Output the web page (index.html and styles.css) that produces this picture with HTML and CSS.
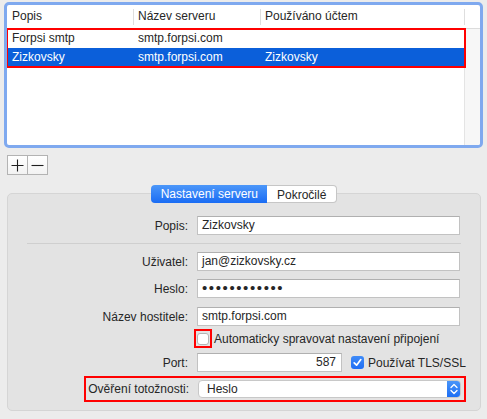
FILE: index.html
```html
<!DOCTYPE html>
<html>
<head>
<meta charset="utf-8">
<link rel="stylesheet" href="styles.css">
</head>
<body>
<div class="table">
  <div class="thead">
    <div class="th">Popis</div>
    <div class="th">Název serveru</div>
    <div class="th">Používáno účtem</div>
    <div class="th"></div>
  </div>
  <div class="tbody">
    <div class="rows">
      <div class="sel-group">
        <div class="tr"><div class="td">Forpsi smtp</div><div class="td">smtp.forpsi.com</div><div class="td"></div></div>
        <div class="tr selected"><div class="td">Zizkovsky</div><div class="td">smtp.forpsi.com</div><div class="td">Zizkovsky</div></div>
      </div>
    </div>
    <div class="scroll"></div>
  </div>
</div>

<div class="pm">
  <div class="pm-btn"><svg width="13" height="13" viewBox="0 0 13 13"><path d="M6.5 0.5V12.5M0.5 6.5H12.5" stroke="#1e1e1e" stroke-width="1.1" fill="none"/></svg></div>
  <div class="pm-btn"><svg width="13" height="13" viewBox="0 0 13 13"><path d="M0.5 6.5H12.5" stroke="#1e1e1e" stroke-width="1.1" fill="none"/></svg></div>
</div>

<div class="tabs">
  <div class="tab active">Nastavení serveru</div>
  <div class="tab">Pokročilé</div>
</div>

<div class="box">
  <div class="row">
    <div class="label">Popis:</div>
    <div class="input">Zizkovsky</div>
  </div>
  <div class="sep"></div>
  <div class="row">
    <div class="label">Uživatel:</div>
    <div class="input">jan@zizkovsky.cz</div>
  </div>
  <div class="row r-heslo">
    <div class="label">Heslo:</div>
    <div class="input pw">••••••••••••</div>
  </div>
  <div class="row r-host">
    <div class="label">Název hostitele:</div>
    <div class="input">smtp.forpsi.com</div>
  </div>
  <div class="row r-auto">
    <div class="cb-mark"><div class="cb"></div></div>
    <div class="cb-text">Automaticky spravovat nastavení připojení</div>
  </div>
  <div class="row r-port">
    <div class="label">Port:</div>
    <div class="input port">587</div>
    <div class="cb checked"><svg width="9" height="9" viewBox="0 0 9 9"><path d="M1.2 4.8L3.6 7.2L7.8 1.6" stroke="#fff" stroke-width="1.7" fill="none" stroke-linecap="round" stroke-linejoin="round"/></svg></div>
    <div class="cb-label">Používat TLS/SSL</div>
  </div>
  <div class="row r-auth">
    <div class="auth-mark">
      <div class="label auto">Ověření totožnosti:</div>
      <div class="popup">
        <span class="popup-text">Heslo</span>
        <span class="popup-arrows"><svg width="8" height="12" viewBox="0 0 8 12"><path d="M1 4.5L4 1.5L7 4.5M1 7.5L4 10.5L7 7.5" stroke="#fff" stroke-width="1.3" fill="none" stroke-linecap="round" stroke-linejoin="round"/></svg></span>
      </div>
    </div>
  </div>
</div>
</body>
</html>
```
FILE: styles.css
```css
html, body {
  margin: 0;
  padding: 0;
}
body {
  width: 487px;
  height: 419px;
  overflow: hidden;
  background: #ececec;
  font-family: "Liberation Sans", Arial, sans-serif;
  font-size: 12px;
  color: #262626;
}

.table {
  margin: 2px 4px 0 4px;
  height: 146px;
  box-sizing: border-box;
  border: 3px solid #7fa9ef;
  border-radius: 5px;
  background: #fff;
  display: flex;
  flex-direction: column;
  overflow: hidden;
}
.thead {
  display: grid;
  grid-template-columns: 126px 127px 204px 16px;
  height: 23px;
  border-bottom: 1px solid #dcdcdc;
  line-height: 23px;
}
.th {
  padding-left: 5px;
  white-space: nowrap;
}
.th + .th {
  background: linear-gradient(#dedede, #dedede) no-repeat 0 4px / 1px 16px;
}
.tbody {
  flex: 1;
  display: flex;
}
.rows {
  flex: 1;
}
.scroll {
  width: 15px;
  background: #f7f7f7;
  border-left: 1px solid #e4e4e4;
}
.sel-group {
  outline: 2px solid #f00;
  outline-offset: -1px;
  margin-right: -1px;
  position: relative;
}
.tr {
  display: grid;
  grid-template-columns: 126px 127px 1fr;
  height: 19px;
  line-height: 19px;
}
.tr.selected {
  background: #0b5fda;
  color: #fff;
}
.td {
  padding-left: 5px;
  white-space: nowrap;
}

.pm {
  display: flex;
  margin: 7px 0 0 7px;
}
.pm-btn {
  width: 19px;
  height: 18px;
  border: 1px solid #b3b3b3;
  background: linear-gradient(#ffffff, #f2f2f2);
  display: flex;
  align-items: center;
  justify-content: center;
}
.pm-btn + .pm-btn {
  border-left: none;
}

.tabs {
  display: flex;
  justify-content: center;
  margin: 10px 6px 0 7px;
  position: relative;
  z-index: 1;
}
.tab {
  height: 18px;
  line-height: 18px;
  box-sizing: border-box;
  padding: 0 10px;
  background: #fff;
  border: 1px solid #c6c6c6;
  border-left: none;
  border-radius: 0 4px 4px 0;
}
.tab.active {
  background: linear-gradient(#4c97f9, #1a6cf4);
  color: #fff;
  border: none;
  border-radius: 4px 0 0 4px;
  padding: 0 9px 0 10px;
}

.box {
  margin: -10px 6px 0 7px;
  height: 218px;
  box-sizing: border-box;
  background: #e3e3e3;
  border: 1px solid #d5d5d5;
  border-radius: 5px;
  padding-top: 22px;
}
.row {
  display: flex;
  align-items: center;
}
.label {
  width: 180px;
  margin-right: 9px;
  text-align: right;
  white-space: nowrap;
  flex: none;
}
.input {
  width: 263px;
  height: 19px;
  box-sizing: border-box;
  background: #fff;
  border: 1px solid #c2c2c2;
  border-top-color: #b0b0b0;
  padding-left: 4px;
  line-height: 17px;
  white-space: nowrap;
}
.input.pw {
  font-size: 15px;
  letter-spacing: 1.6px;
  line-height: 16px;
}
.sep {
  height: 1px;
  background: #cfcfcf;
  margin: 8px 19px 8px 19px;
  width: 434px;
}
.r-heslo { margin-top: 8px; }
.r-host { margin-top: 9px; }
.r-auto {
  margin-top: 3px;
  padding-left: 186px;
}
.cb-mark {
  border: 2px solid #f00;
  padding: 1px;
  width: 12px;
  height: 13px;
  display: flex;
  align-items: center;
  justify-content: center;
}
.cb {
  width: 12px;
  height: 12px;
  box-sizing: border-box;
  background: #fff;
  border: 1px solid #b4b4b4;
  border-radius: 3px;
  flex: none;
}
.cb-text {
  margin-left: 2px;
  white-space: nowrap;
}
.r-port { margin-top: 5px; }
.input.port {
  width: 145px;
  text-align: right;
  padding-right: 5px;
}
.cb.checked {
  width: 13px;
  height: 13px;
  margin-left: 9px;
  border: none;
  background: linear-gradient(#3f8bf8, #1f6ef4);
  display: flex;
  align-items: center;
  justify-content: center;
}
.cb-label {
  margin-left: 4px;
  white-space: nowrap;
}
.r-auth {
  margin-top: 4px;
  justify-content: flex-end;
  margin-right: 14px;
}
.auth-mark {
  display: flex;
  align-items: center;
  border: 2px solid #f00;
  padding: 2px 3px 2px 2px;
}
.label.auto {
  width: auto;
}
.popup {
  width: 263px;
  height: 18px;
  box-sizing: border-box;
  background: #fff;
  border: 1px solid #c8c8c8;
  border-radius: 4px;
  display: flex;
  align-items: center;
  overflow: hidden;
}
.popup-text {
  flex: 1;
  padding-left: 8px;
  line-height: 16px;
}
.popup-arrows {
  width: 14px;
  height: 18px;
  margin-right: -1px;
  background: linear-gradient(#4c97f9, #1a6cf4);
  display: flex;
  align-items: center;
  justify-content: center;
}
```
